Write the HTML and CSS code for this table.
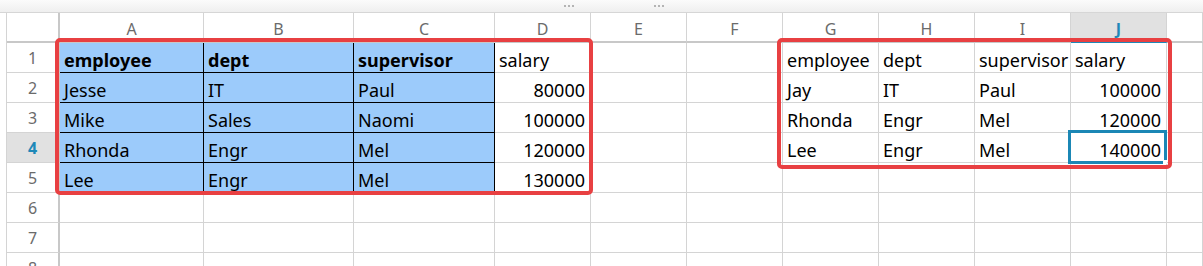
FILE: index.html
```html
<!DOCTYPE html>
<html lang="en">
<head>
    <meta charset="UTF-8">
    <title>Sheet1</title>
    <link rel="stylesheet" href="styles.css">
</head>
<body>
    <div class="topbar">
        <span class="grip"><i></i><i></i><i></i></span>
        <span class="grip second"><i></i><i></i><i></i></span>
    </div>

    <div class="sheet">
        <div class="grid">
            <!-- column headers -->
            <div class="corner"></div>
            <div class="colhead">A</div>
            <div class="colhead">B</div>
            <div class="colhead">C</div>
            <div class="colhead">D</div>
            <div class="colhead">E</div>
            <div class="colhead">F</div>
            <div class="colhead">G</div>
            <div class="colhead">H</div>
            <div class="colhead">I</div>
            <div class="colhead active">J</div>
            <div class="colhead"></div>

            <!-- row 1 -->
            <div class="rowhead">1</div>
            <div class="cell fill bold">employee</div>
            <div class="cell fill bold">dept</div>
            <div class="cell fill bold">supervisor</div>
            <div class="cell">salary</div>
            <div class="cell"></div>
            <div class="cell"></div>
            <div class="cell">employee</div>
            <div class="cell">dept</div>
            <div class="cell">supervisor</div>
            <div class="cell">salary</div>
            <div class="cell"></div>

            <!-- row 2 -->
            <div class="rowhead">2</div>
            <div class="cell fill">Jesse</div>
            <div class="cell fill">IT</div>
            <div class="cell fill">Paul</div>
            <div class="cell num">80000</div>
            <div class="cell"></div>
            <div class="cell"></div>
            <div class="cell">Jay</div>
            <div class="cell">IT</div>
            <div class="cell">Paul</div>
            <div class="cell num">100000</div>
            <div class="cell"></div>

            <!-- row 3 -->
            <div class="rowhead">3</div>
            <div class="cell fill">Mike</div>
            <div class="cell fill">Sales</div>
            <div class="cell fill">Naomi</div>
            <div class="cell num">100000</div>
            <div class="cell"></div>
            <div class="cell"></div>
            <div class="cell">Rhonda</div>
            <div class="cell">Engr</div>
            <div class="cell">Mel</div>
            <div class="cell num">120000</div>
            <div class="cell"></div>

            <!-- row 4 -->
            <div class="rowhead active">4</div>
            <div class="cell fill">Rhonda</div>
            <div class="cell fill">Engr</div>
            <div class="cell fill">Mel</div>
            <div class="cell num">120000</div>
            <div class="cell"></div>
            <div class="cell"></div>
            <div class="cell">Lee</div>
            <div class="cell">Engr</div>
            <div class="cell">Mel</div>
            <div class="cell num">140000</div>
            <div class="cell"></div>

            <!-- row 5 -->
            <div class="rowhead">5</div>
            <div class="cell fill">Lee</div>
            <div class="cell fill">Engr</div>
            <div class="cell fill">Mel</div>
            <div class="cell num">130000</div>
            <div class="cell"></div>
            <div class="cell"></div>
            <div class="cell"></div>
            <div class="cell"></div>
            <div class="cell"></div>
            <div class="cell"></div>
            <div class="cell"></div>

            <!-- rows 6-8 -->
            <div class="rowhead">6</div>
            <div class="cell"></div><div class="cell"></div><div class="cell"></div><div class="cell"></div><div class="cell"></div>
            <div class="cell"></div><div class="cell"></div><div class="cell"></div><div class="cell"></div><div class="cell"></div><div class="cell"></div>

            <div class="rowhead">7</div>
            <div class="cell"></div><div class="cell"></div><div class="cell"></div><div class="cell"></div><div class="cell"></div>
            <div class="cell"></div><div class="cell"></div><div class="cell"></div><div class="cell"></div><div class="cell"></div><div class="cell"></div>

            <div class="rowhead">8</div>
            <div class="cell"></div><div class="cell"></div><div class="cell"></div><div class="cell"></div><div class="cell"></div>
            <div class="cell"></div><div class="cell"></div><div class="cell"></div><div class="cell"></div><div class="cell"></div><div class="cell"></div>
        </div>

        <!-- outlines drawn over the grid -->
        <div class="callout left"></div>
        <div class="callout right"></div>
        <div class="selection"></div>
    </div>
</body>
</html>
```

FILE: styles.css
```css
body {
    margin: 0;
    height: 266px;
    overflow: hidden;
    background: #fff;
    font-family: 'Noto Sans', 'Open Sans', sans-serif;
}
.topbar {
    display: flex;
    align-items: center;
    height: 12px;
    border-bottom: 1px solid #d6d6d6;
    background: linear-gradient(#fbfbfb, #efefef);
}
.grip {
    display: flex;
    gap: 2px;
    margin-left: 564px;
}
.grip.second {
    margin-left: 80px;
}
.grip i {
    width: 2px;
    height: 2px;
    background: #b4b4b4;
}
.sheet {
    position: relative;
}
.grid {
    display: grid;
    grid-template-columns: 53px 144px 150px 141px 96px 96px 96px 96px 96px 96px 96px 1fr;
    grid-auto-rows: 30px;
    margin-left: 6px;
    border-left: 1px solid #d4d4d4;
}
.grid > div {
    box-sizing: border-box;
    border-right: 1px solid #d4d4d4;
    border-bottom: 1px solid #d4d4d4;
    overflow: hidden;
    white-space: nowrap;
}
.corner,
.colhead {
    border-bottom: 2px solid #c8c8c8 !important;
}
.colhead {
    display: flex;
    align-items: flex-end;
    justify-content: center;
    padding-bottom: 2px;
    font-size: 16px;
    line-height: 20px;
    color: #6b6b6b;
}
.colhead.active {
    background: #e1e1e1;
    color: #1e88b8;
    font-weight: bold;
    border-bottom-color: #1e88b8 !important;
}
.corner,
.rowhead {
    border-right: 2px solid #c8c8c8 !important;
}
.rowhead {
    display: flex;
    align-items: center;
    justify-content: center;
    font-size: 16px;
    color: #6b6b6b;
}
.rowhead.active {
    background: #e1e1e1;
    color: #1e88b8;
    font-weight: bold;
}
.cell {
    display: flex;
    align-items: flex-end;
    padding: 0 4px;
    font-size: 18px;
    line-height: 24px;
    color: #000;
}
.cell.num {
    justify-content: flex-end;
    padding-right: 5px;
}
.cell.bold {
    font-weight: bold;
}
.cell.fill {
    background: #9ccbfb;
    border-right-color: #000;
    border-bottom-color: #000;
}
.callout {
    position: absolute;
    top: 25px;
    box-sizing: border-box;
    border: 4px solid #e84042;
    border-radius: 5px;
}
.callout.left {
    left: 55px;
    width: 538px;
    height: 157px;
}
.callout.right {
    left: 777px;
    width: 395px;
    height: 131px;
}
.selection {
    position: absolute;
    left: 1068px;
    top: 117px;
    width: 99px;
    height: 34px;
    box-sizing: border-box;
    border: 3px solid #1b87b5;
}
.selection::after {
    content: '';
    position: absolute;
    right: -3px;
    bottom: -3px;
    width: 4px;
    height: 4px;
    background: #fff;
}
```
